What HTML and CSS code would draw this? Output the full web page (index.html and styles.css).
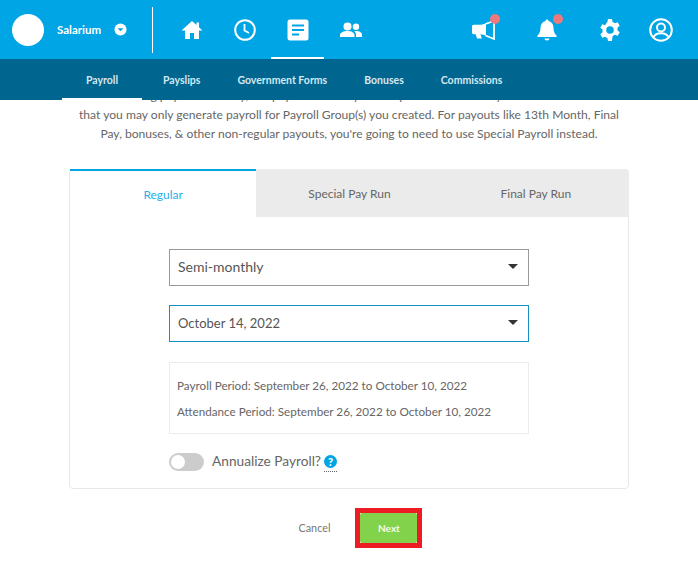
FILE: index.html
```html
<!DOCTYPE html>
<html lang="en">

<head>
    <meta charset="UTF-8">
    <meta name="viewport" content="width=device-width, initial-scale=1.0">
    <title>Payroll</title>
    <link rel="stylesheet" href="styles.css">
</head>

<body>
    <header class="topbar">
        <div class="main-nav">
            <div class="company">
                <div class="avatar"></div>
                <span class="company-name">Salarium</span>
                <svg class="caret-icon" viewBox="0 0 14 14" width="13" height="13">
                    <circle cx="7" cy="7" r="6.5" fill="#fff" />
                    <path d="M3.8 5.6h6.4L7 9z" fill="#00a5e5" />
                </svg>
            </div>
            <div class="nav-icons">
                <a class="nav-icon">
                    <svg viewBox="0 0 24 24" width="24" height="24">
                        <path d="M12 3 1.500 12.500H5V21h5v-6h4v6h5v-8.500h3.500L19 9.300V4.500h-2.500v2.500z" fill="#fff" />
                    </svg>
                </a>
                <a class="nav-icon">
                    <svg viewBox="0 0 24 24" width="24" height="24" fill="none" stroke="#fff">
                        <circle cx="12" cy="12" r="9.800" stroke-width="2" />
                        <path d="M11.500 6v6.500l4.500 2.500" stroke-width="1.800" />
                    </svg>
                </a>
                <a class="nav-icon active">
                    <svg viewBox="0 0 24 24" width="24" height="24">
                        <rect x="1.500" y="1.500" width="21" height="21" rx="2.500" fill="#fff" />
                        <path d="M6 7.500h12M6 12h12M6 16.500h7" stroke="#00a5e5" stroke-width="2.200" />
                    </svg>
                </a>
                <a class="nav-icon">
                    <svg viewBox="0 0 24 24" width="24" height="24">
                        <circle cx="8.500" cy="8.500" r="4" fill="#fff" />
                        <circle cx="17" cy="8.800" r="3.200" fill="#fff" />
                        <path d="M1 19v-2c0-2.500 4-4 7.500-4s7 1.500 7 4v2zM17 19v-2.500c0-1.300-.7-2.400-1.700-3.200.7-.2 1.300-.3 2-.3 2.900 0 5.700 1.300 5.700 3.500V19z" fill="#fff" />
                    </svg>
                </a>
            </div>
            <div class="nav-actions">
                <a class="action-icon">
                    <svg viewBox="0 0 26 24" width="26" height="24">
                        <path d="M1 8.500c0-1 .7-1.700 1.700-1.700H10L15 5.500v12l-5-1.300H9.500l1.300 4.300H6l-1.300-4.300h-2C1.700 16.200 1 15.500 1 14.500z" fill="#fff" />
                        <path d="M14.500 6l8.500-3v18l-8.500-3.500" fill="none" stroke="#fff" stroke-width="1.800" />
                    </svg>
                    <span class="dot"></span>
                </a>
                <a class="action-icon">
                    <svg viewBox="0 0 24 24" width="24" height="24">
                        <path d="M12 1.500c-1 0-1.500.7-1.500 1.500C7 4 5.500 6.500 5.500 10c0 4-1.300 5.800-3 7.500-.5.500-.2 1.500.7 1.500h17.600c.9 0 1.200-1 .7-1.500-1.700-1.700-3-3.500-3-7.500 0-3.500-1.500-6-5-7 0-.8-.5-1.500-1.500-1.500z" fill="#fff" />
                        <path d="M9.500 20.500h5c0 1.300-1 2-2.500 2s-2.500-.7-2.500-2z" fill="#fff" />
                    </svg>
                    <span class="dot"></span>
                </a>
                <a class="action-icon">
                    <svg viewBox="0 0 24 24" width="24" height="24">
                        <path fill="#fff" fill-rule="evenodd" d="M10 1h4l.6 3a8.300 8.300 0 0 1 2.200 1.300l2.900-1 2 3.400-2.300 2a8.300 8.300 0 0 1 0 2.600l2.300 2-2 3.400-2.900-1a8.300 8.300 0 0 1-2.200 1.300L14 23h-4l-.6-3a8.300 8.300 0 0 1-2.200-1.300l-2.900 1-2-3.400 2.300-2a8.300 8.300 0 0 1 0-2.600l-2.300-2 2-3.400 2.900 1A8.300 8.300 0 0 1 9.400 4zM12 8.200a3.800 3.800 0 1 0 0 7.600 3.800 3.800 0 0 0 0-7.600z" />
                    </svg>
                </a>
                <a class="action-icon">
                    <svg viewBox="0 0 24 24" width="24" height="24" fill="none" stroke="#fff" stroke-width="2">
                        <circle cx="12" cy="12" r="10.800" />
                        <circle cx="12" cy="9.500" r="4" />
                        <path d="M4.500 19.500c1-3 4-4.300 7.500-4.300s6.500 1.300 7.500 4.300" />
                    </svg>
                </a>
            </div>
        </div>
        <nav class="sub-nav">
            <a class="sub-link active">Payroll</a>
            <a class="sub-link">Payslips</a>
            <a class="sub-link">Government Forms</a>
            <a class="sub-link">Bonuses</a>
            <a class="sub-link">Commissions</a>
        </nav>
    </header>

    <main class="content">
        <p class="intro">
            When running payroll manually, the payroll summary will be pre-filled and ready to check. Please note<br>
            that you may only generate payroll for Payroll Group(s) you created. For payouts like 13th Month, Final<br>
            Pay, bonuses, &amp; other non-regular payouts, you're going to need to use Special Payroll instead.
        </p>

        <section class="card">
            <div class="tabs">
                <div class="tab active">Regular</div>
                <div class="tab">Special Pay Run</div>
                <div class="tab">Final Pay Run</div>
            </div>
            <div class="card-body">
                <div class="select">Semi-monthly<span class="arrow"></span></div>
                <div class="select focused">October 14, 2022<span class="arrow"></span></div>
                <div class="period-box">
                    <p>Payroll Period: September 26, 2022 to October 10, 2022</p>
                    <p>Attendance Period: September 26, 2022 to October 10, 2022</p>
                </div>
                <div class="annualize">
                    <span class="toggle"><span class="knob"></span></span>
                    <span class="annualize-label">Annualize Payroll?</span>
                    <span class="help">?</span>
                </div>
            </div>
        </section>

        <div class="actions">
            <button class="btn-cancel">Cancel</button>
            <span class="highlight"><button class="btn-next">Next</button></span>
        </div>
    </main>
</body>

</html>
```

FILE: styles.css
```css
* {
    margin: 0;
    padding: 0;
    box-sizing: border-box;
}

body {
    font-family: "Lato", "Noto Sans", sans-serif;
    background-color: #fff;
    color: #555;
    height: 586px;
    overflow: hidden;
}

/* Header stays on top of the page content */
.topbar {
    position: fixed;
    top: 0;
    left: 0;
    right: 0;
    z-index: 2;
}

.main-nav {
    height: 59px;
    background-color: #00a5e5;
    display: flex;
    align-items: center;
    padding-left: 12px;
}

.company {
    display: flex;
    align-items: center;
    width: 141px;
    height: 46px;
    border-right: 1px solid #fff;
}

.avatar {
    width: 32px;
    height: 32px;
    border-radius: 50%;
    background-color: #fff;
}

.company-name {
    margin-left: 13px;
    font-size: 11.5px;
    font-weight: 700;
    color: #fff;
}

.caret-icon {
    margin-left: 13px;
}

.nav-icons {
    display: flex;
    margin-left: 12px;
}

.nav-icon {
    position: relative;
    width: 53px;
    height: 59px;
    display: flex;
    justify-content: center;
    align-items: center;
}

.nav-icon.active {
    border-bottom: 2px solid #fff;
    padding-top: 2px;
}

.nav-actions {
    display: flex;
    margin-left: auto;
    margin-right: 24px;
    gap: 37px;
}

.action-icon {
    position: relative;
    width: 26px;
    height: 26px;
    display: flex;
    justify-content: center;
    align-items: center;
}

.action-icon:last-child {
    margin-left: -12px;
}

.dot {
    position: absolute;
    top: -3px;
    right: -3px;
    width: 10px;
    height: 10px;
    border-radius: 50%;
    background-color: #ec7a7d;
}

.sub-nav {
    height: 41px;
    background-color: #006690;
    display: flex;
    padding-left: 62px;
}

.sub-link {
    height: 41px;
    padding: 0 18px;
    display: flex;
    justify-content: center;
    align-items: center;
    font-size: 10.5px;
    font-weight: 700;
    color: #d5e8f0;
    margin-right: 1px;
}

.sub-link.active {
    width: 80px;
    padding: 2px 0 0;
    border-bottom: 2px solid #fff;
    margin-right: 3px;
}

.content {
    padding-top: 86px;
    display: flex;
    flex-direction: column;
    align-items: center;
}

.intro {
    width: 560px;
    font-size: 12.1px;
    line-height: 19px;
    text-align: center;
    color: #666;
}

.card {
    width: 560px;
    height: 320px;
    margin-top: 26px;
    border: 1px solid #e8e8e8;
    border-radius: 4px;
}

.tabs {
    display: flex;
    height: 48px;
    margin: -1px -1px 0 0;
}

.tab {
    flex: 1;
    display: flex;
    justify-content: center;
    align-items: center;
    font-size: 12px;
    background-color: #ebebeb;
    color: #666;
}

.tab:last-child {
    border-top-right-radius: 4px;
}

.tab.active {
    background-color: #fff;
    color: #29b0ea;
    border-top: 2px solid #00a5e5;
}

.card-body {
    padding: 32px 99px 0;
}

.select {
    position: relative;
    height: 37px;
    margin-bottom: 19px;
    padding: 0 0 2px 8px;
    display: flex;
    align-items: center;
    border: 1px solid #999;
    font-size: 14px;
    color: #555;
}

.select.focused {
    border-color: #1390c4;
    margin-bottom: 20px;
    font-size: 13px;
}

.arrow {
    position: absolute;
    top: 14px;
    right: 10px;
    border-left: 5px solid transparent;
    border-right: 5px solid transparent;
    border-top: 5px solid #333;
}

.period-box {
    height: 72px;
    padding: 12px 7px 0;
    border: 1px solid #ececec;
    font-size: 11.7px;
    color: #666;
}

.period-box p {
    line-height: 20px;
    margin-bottom: 6px;
}

.annualize {
    display: flex;
    align-items: center;
    margin-top: 19px;
}

.toggle {
    position: relative;
    width: 35px;
    height: 18px;
    border-radius: 9px;
    background-color: #ccc;
}

.knob {
    position: absolute;
    top: 2px;
    left: 2px;
    width: 14px;
    height: 14px;
    border-radius: 50%;
    background-color: #fff;
}

.annualize-label {
    margin: -3px 0 0 8px;
    font-size: 13.7px;
    color: #666;
}

.help {
    position: relative;
    width: 13px;
    height: 13px;
    margin: -2px 0 0 3px;
    border-radius: 50%;
    display: flex;
    justify-content: center;
    align-items: center;
    background-color: #00a5e5;
    color: #fff;
    font-size: 11px;
    font-weight: 900;
}

/* dotted tooltip underline sits below the icon */
.help::after {
    content: "";
    position: absolute;
    left: 0;
    right: 0;
    bottom: -4px;
    border-bottom: 1px dotted #666;
}

.actions {
    display: flex;
    align-items: center;
    margin-top: 19px;
    margin-left: 23px;
}

.btn-cancel {
    border: none;
    background: none;
    padding-bottom: 2px;
    font-family: inherit;
    font-size: 10.8px;
    color: #777;
    margin-right: 25px;
}

.highlight {
    display: block;
    border: 5px solid #ed1c24;
}

.btn-next {
    display: block;
    width: 57px;
    height: 30px;
    border: none;
    border-radius: 2px;
    background-color: #83d24b;
    color: #f3fbe9;
    font-family: inherit;
    font-size: 10px;
    font-weight: 700;
}
```
